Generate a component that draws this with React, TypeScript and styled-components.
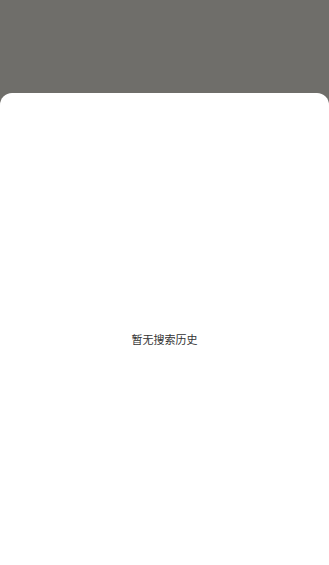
import React from "react";
import styled, { createGlobalStyle } from "styled-components";

const GlobalStyle = createGlobalStyle`
  html, body {
    margin: 0;
    padding: 0;
    height: 100%;
  }
  #root {
    height: 100%;
  }
`;

const Screen = styled.div`
  display: flex;
  flex-direction: column;
  height: 100vh;
  background: #6f6e6a;
  font-family: "Noto Sans CJK SC", "Noto Sans", sans-serif;
`;

const Sheet = styled.div`
  margin-top: 93px;
  flex: 1;
  display: flex;
  align-items: center;
  justify-content: center;
  padding-top: 20px;
  background: #ffffff;
  border-radius: 12px 12px 0 0;
`;

const Empty = styled.p`
  margin: 0;
  font-size: 11px;
  color: #333333;
`;

function App() {
  return (
    <Screen>
      <GlobalStyle />
      <Sheet>
        <Empty>暂无搜索历史</Empty>
      </Sheet>
    </Screen>
  );
}

export default App;
